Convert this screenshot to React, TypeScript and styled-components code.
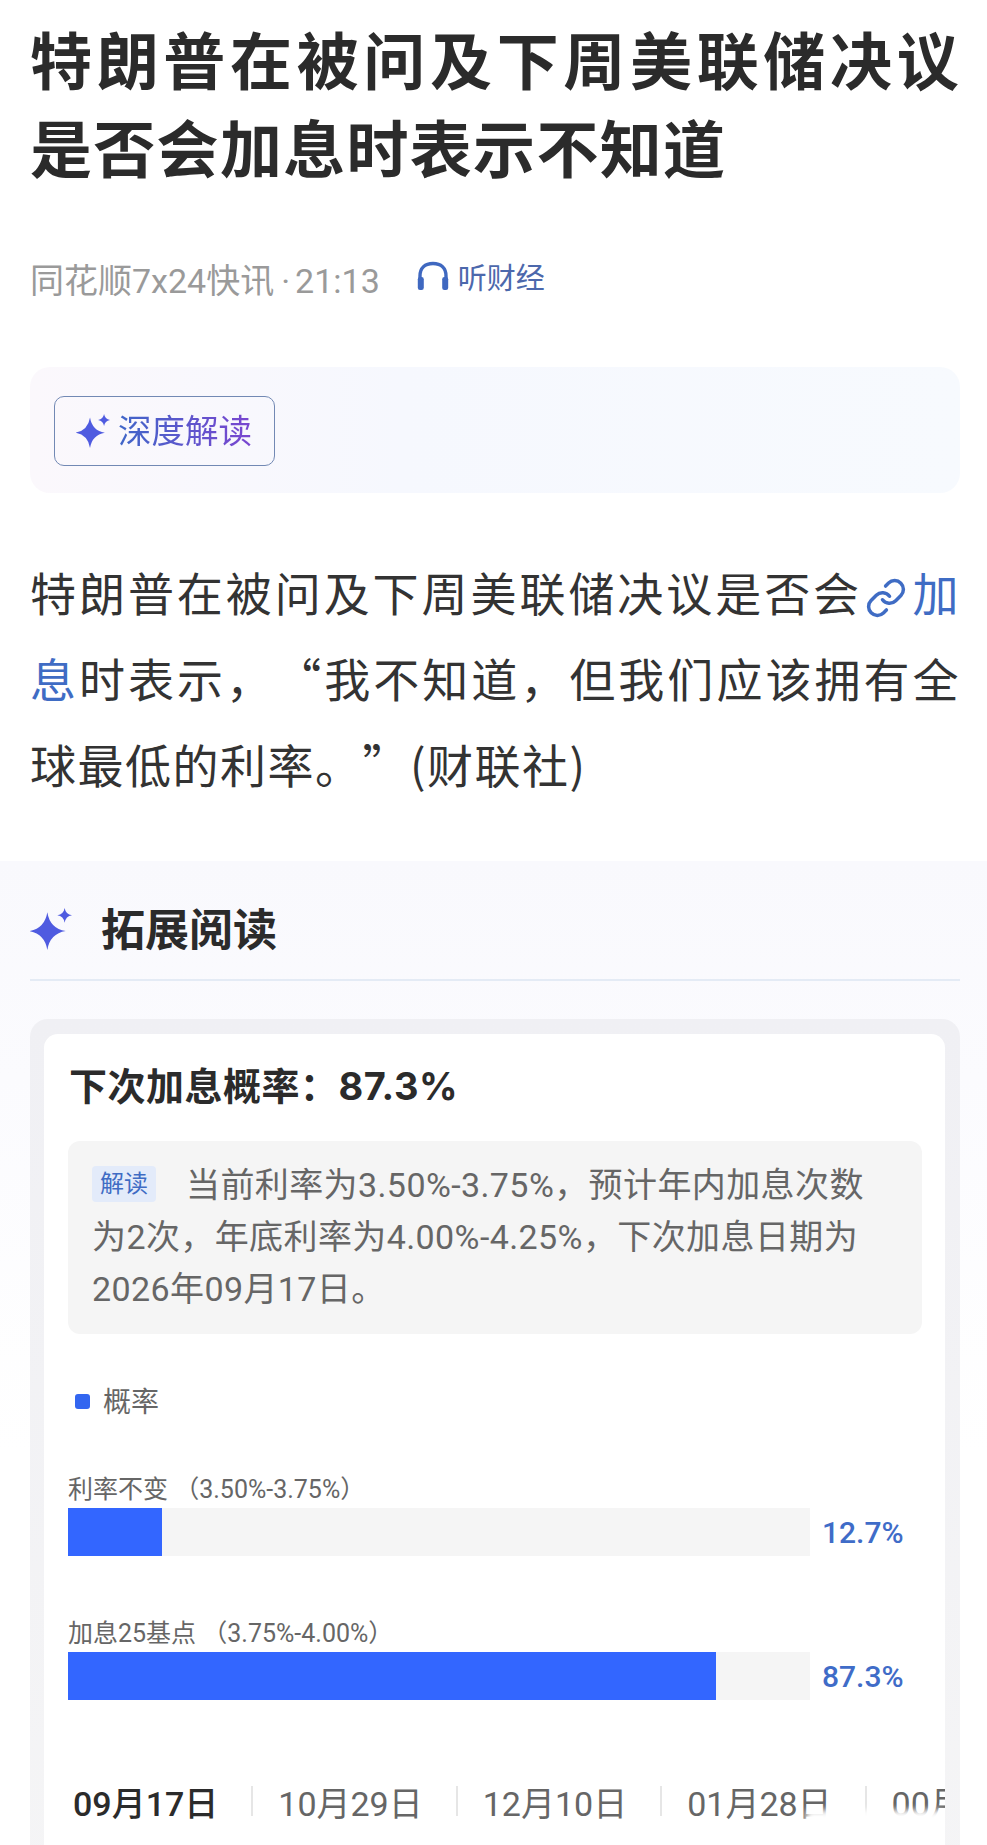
import React from "react";
import styled, { createGlobalStyle } from "styled-components";
import { Link as LinkIcon } from "lucide-react";

const CJK = `"Noto Sans CJK SC", sans-serif`;

const GlobalStyle = createGlobalStyle`
    html, body {
        margin: 0;
        padding: 0;
        background: #fff;
    }
`;

const Page = styled.div`
    width: 987px;
    height: 1845px;
    overflow: hidden;
    background: #fff;
    font-family: Roboto, ${CJK};
    color: #333;
`;

const Article = styled.article`
    padding: 14px 27px 0 30px;
`;

const Title = styled.h1`
    margin: 0;
    font-family: ${CJK};
    font-size: 62px;
    line-height: 88px;
    font-weight: 700;
    letter-spacing: 1.3px;
    text-align: justify;
    color: #2b2b2b;
`;

const Meta = styled.div`
    display: flex;
    align-items: center;
    height: 44px;
    margin-top: 66px;
`;

const Source = styled.span`
    font-size: 34px;
    color: #9a9a9a;
`;

const Dot = styled.span`
    margin: 0 5px 0 7px;
`;

const Listen = styled.span`
    display: flex;
    align-items: center;
    gap: 9px;
    margin-left: 37px;
    margin-top: -4px;
    font-size: 29px;
    color: #4c68ac;
`;

const Panel = styled.div`
    margin-top: 67px;
    height: 126px;
    padding: 29px 24px;
    box-sizing: border-box;
    border-radius: 20px;
    background: linear-gradient(90deg, #fbf8fc 0%, #f6f8fe 40%, #f7fafe 100%);
`;

const DeepButton = styled.div`
    display: flex;
    align-items: center;
    gap: 8px;
    width: 221px;
    height: 70px;
    box-sizing: border-box;
    padding-left: 21px;
    border: 1px solid #7289b4;
    border-radius: 10px;
    white-space: nowrap;
`;

const GradientText = styled.span`
    padding-bottom: 6px;
    font-size: 33.5px;
    background: linear-gradient(90deg, #3f66c8, #7a46d0);
    -webkit-background-clip: text;
    background-clip: text;
    color: transparent;
`;

const Body = styled.p`
    margin: 55px 0 0;
    font-family: ${CJK};
    font-size: 46px;
    line-height: 86px;
    letter-spacing: 1.5px;
    text-align: justify;
    text-spacing-trim: space-all;
    color: #333;
`;

const Keyword = styled.span`
    color: #3f6cc4;
    svg {
        vertical-align: -8px;
        margin: 0 4px 0 3px;
    }
`;

const Section = styled.section`
    margin-top: 55px;
    padding: 40px 27px 0 30px;
    background: linear-gradient(180deg, #f9f9fd 0%, #fbfbfe 22%, #ffffff 60%);
    height: 985px;
    box-sizing: border-box;
`;

const SectionHeader = styled.div`
    display: flex;
    align-items: center;
    height: 56px;
    padding-bottom: 22px;
    border-bottom: 2px solid #e4ebf5;
    gap: 29px;
`;

const SectionTitle = styled.h2`
    margin: -5px 0 0;
    font-family: ${CJK};
    font-size: 44px;
    font-weight: 700;
    color: #2b2b2b;
`;

const OuterCard = styled.div`
    margin-top: 38px;
    padding: 15px 15px 0 14px;
    height: 900px;
    border-radius: 18px 18px 0 0;
    background: linear-gradient(180deg, #f0f0f4 0%, #f5f5f6 100%);
`;

const InnerCard = styled.div`
    position: relative;
    height: 900px;
    padding: 26px 23px 0 24px;
    box-sizing: border-box;
    overflow: hidden;
    background: #fff;
    border-radius: 14px 14px 0 0;
`;

const CardTitle = styled.h3`
    margin: 0 0 0 1px;
    font-family: Inter, ${CJK};
    font-size: 38px;
    line-height: 52px;
    font-weight: 700;
    letter-spacing: 0.5px;
    color: #2b2b2b;
`;

const Callout = styled.div`
    margin-top: 29px;
    padding: 18px 24px 19px;
    border-radius: 12px;
    background: #f5f5f5;
    font-size: 34px;
    line-height: 52px;
    letter-spacing: 0.4px;
    color: #666;
    white-space: nowrap;
`;

const Tag = styled.span`
    display: inline-block;
    width: 64px;
    height: 36px;
    margin-right: 30px;
    border-radius: 4px;
    background: #e3ebfa;
    color: #3f6cc4;
    font-size: 24px;
    line-height: 36px;
    letter-spacing: 0;
    text-align: center;
    vertical-align: 5px;
`;

const Legend = styled.div`
    display: flex;
    align-items: center;
    gap: 13px;
    height: 40px;
    margin-top: 46px;
    padding-left: 7px;
    font-size: 28px;
    color: #666;
`;

const Swatch = styled.i`
    width: 15px;
    height: 15px;
    margin-top: 2px;
    border-radius: 3px;
    background: #3366f0;
`;

const RateBlock = styled.div<{ $top: number }>`
    margin-top: ${(p) => p.$top}px;
`;

const RateLabel = styled.div`
    height: 32px;
    margin-bottom: 2px;
    font-size: 25px;
    line-height: 32px;
    color: #666;
`;

const RateRow = styled.div`
    display: flex;
    align-items: center;
    gap: 12px;
`;

const Track = styled.div`
    width: 742px;
    height: 48px;
    background: #f5f5f5;
`;

const Fill = styled.div`
    height: 100%;
    background: #3366ff;
`;

const RateValue = styled.span`
    font-size: 30px;
    font-weight: 500;
    color: #3f6cc8;
`;

const DateRow = styled.div`
    display: flex;
    align-items: center;
    height: 48px;
    margin-top: 77px;
    white-space: nowrap;
`;

const DateItem = styled.span<{ $active?: boolean }>`
    flex: none;
    padding: 0 33px 0 25px;
    margin-left: ${(p) => (p.$active ? "5px" : "0")};
    font-size: 34px;
    font-weight: ${(p) => (p.$active ? 500 : 400)};
    color: ${(p) => (p.$active ? "#2b2b2b" : "#666")};
    &:first-child {
        padding-left: 0;
    }
`;

const DateDivider = styled.i`
    flex: none;
    width: 2px;
    height: 30px;
    background: #e6e6e6;
`;

const Smear = styled.div`
    position: absolute;
    left: 762px;
    right: 0;
    top: 776px;
    height: 26px;
    background: #fff;
    filter: blur(3px);
`;

function Sparkle({ size }: { size: number }) {
    return (
        <svg width={size} height={size} viewBox="0 0 40 40" fill="#4f5be0">
            <path d="M16.5 4 Q19 19.5 34 22 Q19 24.5 16.5 40 Q14 24.5 -1 22 Q14 19.5 16.5 4 Z" />
            <path d="M33 0 Q34 6 40 7 Q34 8 33 14 Q32 8 26 7 Q32 6 33 0 Z" />
        </svg>
    );
}

function Headphones() {
    return (
        <svg width="32" height="30" viewBox="0 0 32 30" fill="none">
            <path d="M3 20 V15 C3 7 8 2.5 16 2.5 C24 2.5 29 7 29 15 V20" stroke="#3f68c0" strokeWidth="3.4" />
            <rect x="0.8" y="16" width="6" height="13" rx="2.2" fill="#3f68c0" />
            <rect x="25.2" y="16" width="6" height="13" rx="2.2" fill="#3f68c0" />
        </svg>
    );
}

const rates = [
    { label: "利率不变 （3.50%-3.75%）", value: 12.7, top: 54 },
    { label: "加息25基点 （3.75%-4.00%）", value: 87.3, top: 62 },
];

const dates = ["09月17日", "10月29日", "12月10日", "01月28日", "00月"];

export default function App() {
    return (
        <Page lang="zh-CN">
            <GlobalStyle />
            <Article>
                <Title>特朗普在被问及下周美联储决议是否会加息时表示不知道</Title>
                <Meta>
                    <Source>
                        同花顺7x24快讯<Dot>·</Dot>21:13
                    </Source>
                    <Listen>
                        <Headphones />
                        听财经
                    </Listen>
                </Meta>
                <Panel>
                    <DeepButton>
                        <Sparkle size={34} />
                        <GradientText>深度解读</GradientText>
                    </DeepButton>
                </Panel>
                <Body>
                    特朗普在被问及下周美联储决议是否会
                    <Keyword>
                        <LinkIcon size={42} strokeWidth={2} />加息
                    </Keyword>
                    时表示，“我不知道，但我们应该拥有全球最低的利率。”(财联社)
                </Body>
            </Article>
            <Section>
                <SectionHeader>
                    <Sparkle size={42} />
                    <SectionTitle>拓展阅读</SectionTitle>
                </SectionHeader>
                <OuterCard>
                    <InnerCard>
                        <CardTitle>下次加息概率：87.3%</CardTitle>
                        <Callout>
                            <Tag>解读</Tag>
                            当前利率为3.50%-3.75%，预计年内加息次数
                            <br />
                            为2次，年底利率为4.00%-4.25%，下次加息日期为
                            <br />
                            2026年09月17日。
                        </Callout>
                        <Legend>
                            <Swatch />
                            概率
                        </Legend>
                        {rates.map((rate) => (
                            <RateBlock key={rate.label} $top={rate.top}>
                                <RateLabel>{rate.label}</RateLabel>
                                <RateRow>
                                    <Track>
                                        <Fill style={{ width: `${rate.value}%` }} />
                                    </Track>
                                    <RateValue>{rate.value}%</RateValue>
                                </RateRow>
                            </RateBlock>
                        ))}
                        <DateRow>
                            {dates.map((date, i) => (
                                <React.Fragment key={date}>
                                    {i > 0 && <DateDivider />}
                                    <DateItem $active={i === 0}>{date}</DateItem>
                                </React.Fragment>
                            ))}
                        </DateRow>
                        <Smear />
                    </InnerCard>
                </OuterCard>
            </Section>
        </Page>
    );
}
